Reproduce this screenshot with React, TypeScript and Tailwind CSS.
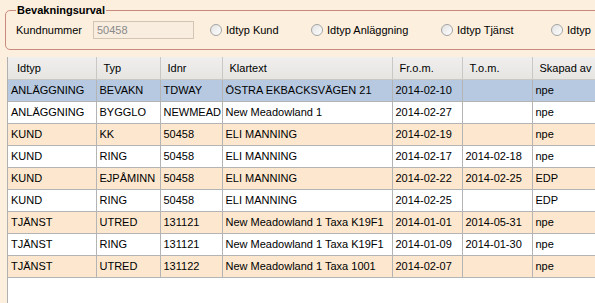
import React from "react";

type Row = { idtyp: string; typ: string; idnr: string; klartext: string; from: string; tom: string; skapad: string };

const rows: Row[] = [
  { idtyp: "ANLÄGGNING", typ: "BEVAKN", idnr: "TDWAY", klartext: "ÖSTRA EKBACKSVÄGEN 21", from: "2014-02-10", tom: "", skapad: "npe" },
  { idtyp: "ANLÄGGNING", typ: "BYGGLO", idnr: "NEWMEAD", klartext: "New Meadowland 1", from: "2014-02-27", tom: "", skapad: "npe" },
  { idtyp: "KUND", typ: "KK", idnr: "50458", klartext: "ELI MANNING", from: "2014-02-19", tom: "", skapad: "npe" },
  { idtyp: "KUND", typ: "RING", idnr: "50458", klartext: "ELI MANNING", from: "2014-02-17", tom: "2014-02-18", skapad: "npe" },
  { idtyp: "KUND", typ: "EJPÅMINN", idnr: "50458", klartext: "ELI MANNING", from: "2014-02-22", tom: "2014-02-25", skapad: "EDP" },
  { idtyp: "KUND", typ: "RING", idnr: "50458", klartext: "ELI MANNING", from: "2014-02-25", tom: "", skapad: "EDP" },
  { idtyp: "TJÄNST", typ: "UTRED", idnr: "131121", klartext: "New Meadowland 1 Taxa K19F1", from: "2014-01-01", tom: "2014-05-31", skapad: "npe" },
  { idtyp: "TJÄNST", typ: "RING", idnr: "131121", klartext: "New Meadowland 1 Taxa K19F1", from: "2014-01-09", tom: "2014-01-30", skapad: "npe" },
  { idtyp: "TJÄNST", typ: "UTRED", idnr: "131122", klartext: "New Meadowland 1 Taxa 1001", from: "2014-02-07", tom: "", skapad: "npe" },
];

const headers = ["Idtyp", "Typ", "Idnr", "Klartext", "Fr.o.m.", "T.o.m.", "Skapad av"];
const widths = [88, 64, 62, 170, 70, 70, 80];

function Radio({ label, className }: { label: string; className: string }) {
  return (
    <label className={`flex shrink-0 items-center gap-[4px] whitespace-nowrap ${className}`}>
      <span className="h-[12px] w-[12px] shrink-0 rounded-full border border-[#a4a4a4] bg-gradient-to-br from-[#e2e2e2] to-white" />
      <span>{label}</span>
    </label>
  );
}

export default function App() {
  return (
    <div
      className="h-[303px] w-[595px] overflow-hidden bg-[#fcefdd] text-[11px] text-black"
      style={{ fontFamily: '"Liberation Sans", Arial, sans-serif' }}
    >
      <fieldset className="ml-[5px] mt-[3px] h-[47px] w-[620px] rounded-[5px] border border-[#c98a7e] px-[10px]">
        <legend className="px-[1px] text-[11px] font-bold leading-[14px]">Bevakningsurval</legend>
        <div className="mt-[4px] flex h-[18px] items-center whitespace-nowrap">
          <span className="w-[77px] shrink-0">Kundnummer</span>
          <div className="flex h-[18px] w-[101px] shrink-0 items-center border border-[#d3c5b4] bg-[#f8eddf] px-[3px] text-[#8a8a8a]">
            50458
          </div>
          <div className="ml-[16px] flex items-center">
            <Radio label="Idtyp Kund" className="w-[101px]" />
            <Radio label="Idtyp Anläggning" className="w-[130px]" />
            <Radio label="Idtyp Tjänst" className="w-[110px]" />
            <Radio label="Idtyp" className="w-[40px]" />
          </div>
        </div>
      </fieldset>
      <div className="ml-[7px] mt-[7px] h-[250px] border-l border-[#b0b0b0] bg-white">
        <table className="table-fixed border-collapse" style={{ width: 604 }}>
          <colgroup>
            {widths.map((w, i) => (
              <col key={i} style={{ width: w }} />
            ))}
          </colgroup>
          <thead>
            <tr className="h-[22px] bg-gradient-to-b from-[#f0efed] to-[#e6e5e2]">
              {headers.map((h, i) => (
                <th
                  key={h}
                  className={`border-b border-r border-[#c9c8c5] text-left font-normal ${i === 0 ? "pl-[9px]" : "pl-[7px]"}`}
                >
                  {h}
                </th>
              ))}
            </tr>
          </thead>
          <tbody>
            {rows.map((r, i) => {
              const bg = i === 0 ? "bg-[#b6c9e0]" : i % 2 === 0 ? "bg-[#fde8cf]" : "bg-white";
              const cells = [r.idtyp, r.typ, r.idnr, r.klartext, r.from, r.tom, r.skapad];
              return (
                <tr key={i} className={`h-[22px] ${bg}`}>
                  {cells.map((c, j) => (
                    <td
                      key={j}
                      className="overflow-hidden whitespace-nowrap border-b border-r border-[#b4b4b4] pl-[3px]"
                    >
                      {c}
                    </td>
                  ))}
                </tr>
              );
            })}
          </tbody>
        </table>
      </div>
    </div>
  );
}
